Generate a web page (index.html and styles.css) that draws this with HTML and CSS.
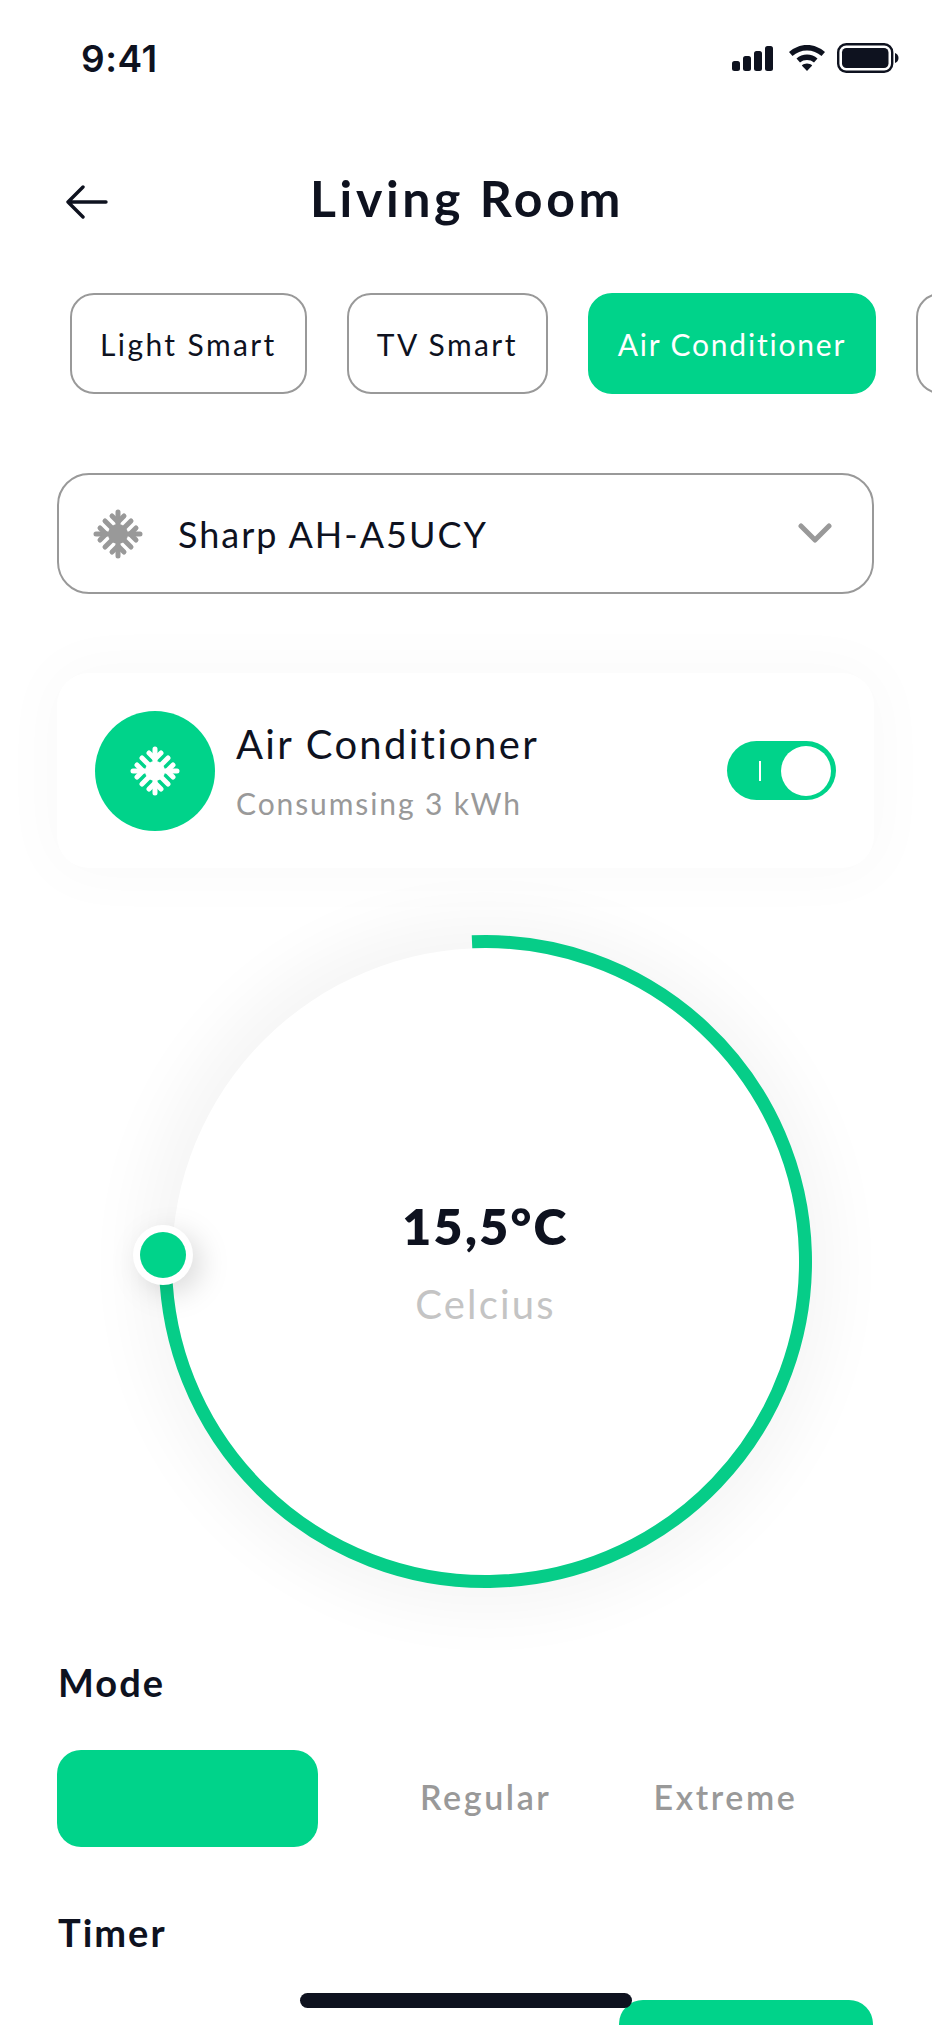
FILE: index.html
```html
<!DOCTYPE html>
<html lang="en">
<head>
    <meta charset="UTF-8">
    <meta name="viewport" content="width=device-width, initial-scale=1.0">
    <title>Living Room</title>
    <link rel="stylesheet" href="styles.css">
</head>
<body>
    <svg class="sprites" width="0" height="0">
        <symbol id="snowflake" viewBox="0 0 50 50">
            <g fill="none" stroke="currentColor" stroke-width="5" stroke-linecap="round" stroke-linejoin="round">
                <path d="M25 3V47M3 25H47"/>
                <path d="M19 7l6 6 6-6M19 43l6-6 6 6M7 19l6 6-6 6M43 19l-6 6 6 6"/>
                <path d="M12 12L38 38M38 12L12 38"/>
            </g>
            <circle cx="25" cy="25" r="10" fill="currentColor"/>
        </symbol>
    </svg>

    <div class="screen">
        <div class="status-bar">
            <span class="time">9:41</span>
            <div class="status-icons">
                <svg class="signal" width="41" height="25" viewBox="0 0 41 25" fill="#0e121f">
                    <rect x="0" y="15" width="8" height="10" rx="2.5"/>
                    <rect x="11" y="10" width="8" height="15" rx="2.5"/>
                    <rect x="22" y="5" width="8" height="20" rx="2.5"/>
                    <rect x="33" y="0" width="8" height="25" rx="2.5"/>
                </svg>
                <svg width="36" height="26" viewBox="0 0 36 26" fill="#0e121f">
                    <path d="M18 0C11 0 5 2.700 0 7L3.500 11C7.500 7.500 12.500 5.500 18 5.500S28.500 7.500 32.500 11L36 7C31 2.700 25 0 18 0Z"/>
                    <path d="M18 9.500C14 9.500 10.300 11 7.500 13.500L11 17.500C13 15.800 15.400 15 18 15S23 15.800 25 17.500L28.500 13.500C25.700 11 22 9.500 18 9.500Z"/>
                    <path d="M18 18.500C16 18.500 14.200 19.200 12.800 20.400L18 26L23.200 20.400C21.800 19.200 20 18.500 18 18.500Z"/>
                </svg>
                <svg width="62" height="30" viewBox="0 0 62 30">
                    <rect x="1.200" y="1.200" width="54" height="27.600" rx="8" fill="none" stroke="#0e121f" stroke-width="2.400"/>
                    <rect x="5" y="5" width="46.500" height="20" rx="4.500" fill="#0e121f"/>
                    <path d="M58 10c2 .5 3.500 2.500 3.500 5s-1.500 4.500-3.500 5z" fill="#0e121f"/>
                </svg>
            </div>
        </div>

        <div class="header">
            <svg class="back" width="42" height="34" viewBox="0 0 42 34" fill="none" stroke="#0e121f" stroke-width="3.400" stroke-linecap="round" stroke-linejoin="round">
                <path d="M2 17H40M17 2L2 17L17 32"/>
            </svg>
            <h1>Living Room</h1>
        </div>

        <div class="device-tabs">
            <div class="pill">Light Smart</div>
            <div class="pill">TV Smart</div>
            <div class="pill active">Air Conditioner</div>
            <div class="pill spare"></div>
        </div>

        <div class="select-box">
            <svg class="flake"><use href="#snowflake"/></svg>
            <span class="select-name">Sharp AH-A5UCY</span>
            <svg class="chevron" width="34" height="21" viewBox="0 0 34 21" fill="none" stroke="#999" stroke-width="5" stroke-linecap="round" stroke-linejoin="round">
                <path d="M3 3L17 17L31 3"/>
            </svg>
        </div>

        <div class="device-card">
            <div class="device-icon">
                <svg class="flake white"><use href="#snowflake"/></svg>
            </div>
            <div class="device-text">
                <div class="device-title">Air Conditioner</div>
                <div class="device-sub">Consumsing 3 kWh</div>
            </div>
            <div class="toggle">
                <span class="toggle-mark"></span>
                <span class="toggle-knob"></span>
            </div>
        </div>

        <div class="dial">
            <div class="dial-face">
                <div class="temp">15,5°C</div>
                <div class="unit">Celcius</div>
            </div>
            <svg class="dial-arc" viewBox="0 0 653 653">
                <path d="M313 6.800A320 320 0 1 1 6.500 326.500" fill="none" stroke="#06cd88" stroke-width="13"/>
                <g class="handle">
                    <circle cx="4" cy="320" r="30" fill="#fff"/>
                    <circle cx="4" cy="320" r="23" fill="#00d38a"/>
                </g>
            </svg>
        </div>

        <h2 class="section-title mode-title">Mode</h2>
        <div class="mode-row">
            <div class="green-btn mode-active"></div>
            <span class="mode-option">Regular</span>
            <span class="mode-option">Extreme</span>
        </div>

        <h2 class="section-title timer-title">Timer</h2>
        <div class="timer-row">
            <div class="green-btn timer-active"></div>
        </div>

        <div class="home-bar"></div>
    </div>
</body>
</html>
```

FILE: styles.css
```css
* {
    box-sizing: border-box;
}
body {
    margin: 0;
    background: #fff;
    font-family: 'Lato', 'Open Sans', sans-serif;
    color: #0e121f;
}
.sprites {
    display: block;
}
.screen {
    position: relative;
    width: 932px;
    height: 2025px;
    overflow: hidden;
    background: #fff;
}

/* status bar */
.status-bar {
    display: flex;
    align-items: center;
    justify-content: space-between;
    height: 40px;
    margin-top: 38px;
    padding: 0 33px 0 81px;
}
.time {
    font-family: 'Inter', sans-serif;
    font-size: 37px;
    font-weight: 600;
    letter-spacing: 0.5px;
}
.status-icons {
    display: flex;
    align-items: center;
    gap: 12px;
}
.status-icons svg {
    display: block;
}
.status-icons .signal {
    margin-right: 4px;
}

/* header */
.header {
    display: flex;
    align-items: center;
    justify-content: center;
    position: relative;
    height: 100px;
    margin-top: 76px;
}
.header h1 {
    margin: 0 0 12px 2px;
    font-size: 50px;
    font-weight: 700;
    letter-spacing: 3.600px;
}
.back {
    position: absolute;
    left: 66px;
    top: 31px;
}

/* tabs */
.device-tabs {
    display: flex;
    gap: 40px;
    margin-top: 39px;
    padding-left: 70px;
}
.pill {
    display: flex;
    align-items: center;
    flex: none;
    height: 101px;
    padding: 0 28px;
    border: 2.500px solid #999;
    border-radius: 24px;
    font-size: 30px;
    letter-spacing: 2.400px;
}
.pill.active {
    border-color: #00d38a;
    background: #00d38a;
    color: #fff;
    letter-spacing: 1.800px;
}
.pill.spare {
    width: 120px;
}

/* select */
.select-box {
    display: flex;
    align-items: center;
    width: 817px;
    height: 121px;
    margin: 79px 0 0 57px;
    padding: 0 40px 0 34px;
    border: 2.500px solid #999;
    border-radius: 32px;
}
.flake {
    flex: none;
    width: 50px;
    height: 50px;
    color: #999;
}
.flake.white {
    color: #fff;
}
.select-name {
    flex: 1;
    margin-left: 35px;
    font-size: 36px;
    letter-spacing: 2px;
}
.chevron {
    flex: none;
}

/* device card */
.device-card {
    display: flex;
    align-items: center;
    width: 817px;
    height: 195px;
    margin: 79px 0 0 57px;
    padding: 0 38px;
    border-radius: 32px;
    background: #fff;
    box-shadow: 0 0 60px 10px rgba(0, 0, 0, 0.022);
}
.device-icon {
    display: flex;
    align-items: center;
    justify-content: center;
    flex: none;
    width: 120px;
    height: 120px;
    border-radius: 50%;
    background: #00d38a;
}
.device-text {
    flex: 1;
    margin-left: 21px;
}
.device-title {
    font-size: 40px;
    line-height: 48px;
    letter-spacing: 2.300px;
}
.device-sub {
    margin-top: 17px;
    font-size: 30px;
    line-height: 36px;
    letter-spacing: 1.900px;
    color: #999;
}
.toggle {
    display: flex;
    align-items: center;
    justify-content: space-between;
    flex: none;
    width: 109px;
    height: 59px;
    padding: 0 5px 0 32px;
    border-radius: 30px;
    background: #00d38a;
}
.toggle-mark {
    width: 2px;
    height: 20px;
    background: #fff;
}
.toggle-knob {
    width: 50px;
    height: 50px;
    border-radius: 50%;
    background: #fff;
}

/* dial */
.dial {
    display: flex;
    align-items: center;
    justify-content: center;
    position: relative;
    width: 653px;
    height: 653px;
    margin: 67px 0 0 159px;
}
.dial-face {
    display: flex;
    flex-direction: column;
    align-items: center;
    justify-content: center;
    width: 628px;
    height: 628px;
    border-radius: 50%;
    background: #fff;
    box-shadow: 0 3px 60px 35px rgba(0, 0, 0, 0.04);
}
.dial-arc {
    position: absolute;
    left: 0;
    top: 0;
    width: 653px;
    height: 653px;
    overflow: visible;
}
.handle {
    filter: drop-shadow(8px 8px 14px rgba(0, 0, 0, 0.14));
}
.temp {
    font-size: 50px;
    line-height: 60px;
    font-weight: 800;
    letter-spacing: 2.300px;
}
.unit {
    margin-top: 25px;
    font-size: 40px;
    line-height: 46px;
    letter-spacing: 2.200px;
    color: #c4c4c4;
}

/* mode and timer */
.section-title {
    margin: 0 0 0 58px;
    height: 40px;
    font-size: 38px;
    line-height: 40px;
    font-weight: 700;
    letter-spacing: 2px;
}
.mode-title {
    margin-top: 74px;
}
.timer-title {
    margin-top: 65px;
}
.mode-row {
    display: flex;
    align-items: center;
    gap: 102px;
    margin: 48px 0 0 57px;
}
.mode-option {
    margin-bottom: 4px;
    font-size: 34px;
    font-weight: 600;
    letter-spacing: 2.600px;
    color: #999;
}
.green-btn {
    height: 97px;
    border-radius: 24px;
    background: #00d38a;
}
.mode-active {
    width: 261px;
}
.timer-row {
    display: flex;
    justify-content: flex-end;
    margin-top: 48px;
    padding-right: 59px;
}
.timer-active {
    width: 254px;
}
.home-bar {
    position: absolute;
    left: 300px;
    top: 1993px;
    width: 332px;
    height: 15px;
    border-radius: 8px;
    background: #0e121f;
}
```
